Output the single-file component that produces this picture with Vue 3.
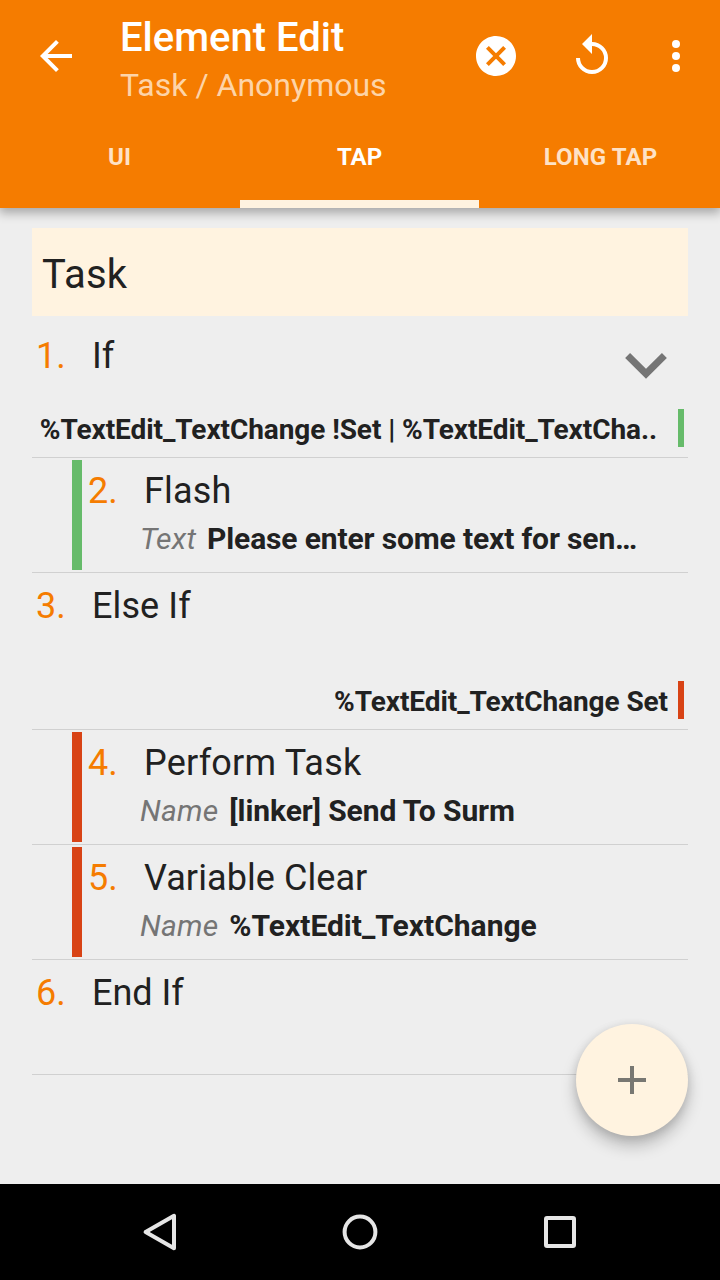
<script setup>
const tabs = [
  { label: 'UI', cls: 'tab-ui' },
  { label: 'TAP', cls: 'tab-tap', active: true },
  { label: 'LONG TAP', cls: 'tab-long' },
]

const actions = [
  { n: 1, name: 'If', kind: 'first', cond: '%TextEdit_TextChange !Set | %TextEdit_TextCha..', color: 'green', toggle: true },
  { n: 2, name: 'Flash', kind: 'nested', color: 'green', label: 'Text', value: 'Please enter some text for sen…', nameTrack: 0.2, valueTrack: -0.14 },
  { n: 3, name: 'Else If', kind: 'branch', cond: '%TextEdit_TextChange Set', color: 'red', nameTrack: 0.1 },
  { n: 4, name: 'Perform Task', kind: 'nested', color: 'red', label: 'Name', value: '[linker] Send To Surm', nameTrack: 0.2, valueTrack: -0.09 },
  { n: 5, name: 'Variable Clear', kind: 'nested', color: 'red', label: 'Name', value: '%TextEdit_TextChange', nameTrack: 0.08 },
  { n: 6, name: 'End If', kind: 'plain' },
]
const track = (v) => ({ letterSpacing: `${v || 0}px` })
</script>

<template>
  <div class="screen">
    <header class="header">
      <div class="toolbar">
        <svg class="back" width="32" height="32" viewBox="4 4 16 16"><path fill="#fff" d="M20 11H7.83l5.59-5.59L12 4l-8 8 8 8 1.41-1.41L7.83 13H20v-2z" /></svg>
        <div class="titles">
          <div class="title">Element Edit</div>
          <div class="subtitle">Task / Anonymous</div>
        </div>
        <svg class="close" width="48" height="48" viewBox="0 0 24 24"><path fill="#fff" d="M12 2C6.47 2 2 6.47 2 12s4.47 10 10 10 10-4.47 10-10S17.53 2 12 2zm5 13.59L15.59 17 12 13.41 8.41 17 7 15.59 10.59 12 7 8.41 8.41 7 12 10.59 15.59 7 17 8.41 13.41 12 17 15.59z" /></svg>
        <svg class="undo" width="48" height="48" viewBox="0 0 24 24"><path fill="#fff" d="M12 5V1L7 6l5 5V7a6 6 0 1 1-6 6H4a8 8 0 1 0 8-8z" /></svg>
        <svg class="more" width="8" height="32" viewBox="0 0 8 32"><g fill="#fff"><circle cx="4" cy="4" r="4" /><circle cx="4" cy="16" r="4" /><circle cx="4" cy="28" r="4" /></g></svg>
      </div>
      <nav class="tabs">
        <div v-for="t in tabs" :key="t.label" class="tab" :class="{ active: t.active }"><span :class="t.cls">{{ t.label }}</span></div>
      </nav>
    </header>

    <main class="content">
      <div class="task-box">Task</div>
      <div v-for="a in actions" :key="a.n" class="row" :class="a.kind">
        <div v-if="a.kind === 'nested'" class="indent-bar" :class="a.color"></div>
        <div class="body">
          <div class="heading">
            <span class="num">{{ a.n }}.</span>
            <span class="name" :style="track(a.nameTrack)">{{ a.name }}</span>
            <svg v-if="a.toggle" class="chevron" width="42" height="26" viewBox="0 0 42 26"><path d="M2.6 2.6 21 20.8 39.4 2.6" fill="none" stroke="#757575" stroke-width="7" /></svg>
          </div>
          <div v-if="a.cond" class="cond"><span class="cond-text">{{ a.cond }}</span><i class="cond-bar" :class="a.color"></i></div>
          <div v-if="a.label" class="param"><em>{{ a.label }}</em><b :style="track(a.valueTrack)">{{ a.value }}</b></div>
        </div>
      </div>
    </main>

    <button class="fab"><svg width="28" height="28" viewBox="0 0 28 28"><path d="M12 0h4v12h12v4H16v12h-4V16H0v-4h12z" fill="#787772" /></svg></button>

    <footer class="navbar">
      <svg width="40" height="40" viewBox="0 0 40 40"><path d="M34 3.8V36.2L5.6 20z" /></svg>
      <svg width="40" height="40" viewBox="0 0 40 40"><circle cx="20" cy="20" r="15.4" /></svg>
      <svg width="40" height="40" viewBox="0 0 40 40"><rect x="6" y="6" width="28" height="28" rx="1" /></svg>
    </footer>
  </div>
</template>

<style>
html, body { margin: 0; background: #eee; }
</style>

<style scoped>
.screen { position: relative; width: 720px; height: 1280px; display: flex; flex-direction: column; overflow: hidden; background: #eee; font-family: Roboto, sans-serif; color: #212121; white-space: nowrap; }
.header { flex: none; height: 208px; background: #f57c00; box-shadow: 0 4px 10px 1px rgba(0, 0, 0, .3); z-index: 1; }
.toolbar { height: 112px; display: flex; align-items: flex-start; }
.toolbar svg { flex: none; }
.back { margin: 40px 48px 0 40px; }
.titles { width: 352px; padding-top: 14px; }
.title { font-size: 40px; line-height: 48px; font-weight: 500; color: #fff; }
.subtitle { margin-top: 3px; font-size: 32px; line-height: 40px; color: #fdd4a8; }
.close { margin-top: 32px; }
.undo { margin: 32px 0 0 48px; }
.more { margin: 40px 0 0 56px; }
.tabs { height: 96px; display: flex; }
.tab { box-sizing: border-box; flex: 1; height: 96px; padding: 1px 0 0; text-align: center; font-size: 24px; line-height: 88px; font-weight: 700; color: #fee2c6; }
.tab.active { flex: none; width: 239px; color: #fff; border-bottom: 8px solid #fff3e0; }
.tab:first-child { flex: none; width: 240px; }
.tab-long { letter-spacing: .1px; margin-left: 2px; }
.tab-ui { margin-right: 1px; }
.content { flex: none; height: 956px; padding: 20px 32px 0; box-sizing: content-box; }
.task-box { height: 83px; padding: 5px 0 0 10px; background: #fff3e0; font-size: 40px; line-height: 84px; letter-spacing: .25px; }
.row { box-sizing: border-box; display: flex; height: 115px; border-bottom: 1px solid #d0d0d0; }
.row.branch { height: 157px; }
.row.first { height: 142px; padding-top: 7px; }
.indent-bar { width: 10px; height: 110px; margin: 2px 0 0 40px; flex: none; }
.green { background: #66bb6a; }
.red { background: #d84315; }
.body { flex: 1; min-width: 0; display: flex; flex-direction: column; }
.heading { display: flex; height: 64px; margin-top: 1px; line-height: 65px; font-size: 36px; padding-left: 4px; }
.first .heading { height: 50px; }
.nested .heading { padding-left: 6px; }
.num { width: 56px; color: #f57c00; }
.chevron { margin: 29px 21px 0 auto; }
.cond { display: flex; justify-content: flex-end; margin: auto 4px 10px 0; height: 38px; font-size: 28px; line-height: 41px; font-weight: 700; letter-spacing: -.075px; }
.cond-bar { width: 6px; height: 38px; margin-left: 10px; }
.first .cond-bar { margin-left: 21px; }
.param { padding-left: 58px; font-size: 30px; line-height: 32px; }
.param em { color: #757575; margin-right: 11px; letter-spacing: .2px; }
.fab { position: absolute; left: 576px; top: 1024px; width: 112px; height: 112px; padding: 0; border: 0; border-radius: 50%; background: #fff3e0; display: flex; align-items: center; justify-content: center; box-shadow: 0 10px 16px rgba(0, 0, 0, .22), 0 2px 10px rgba(0, 0, 0, .12); }
.navbar { flex: none; height: 96px; background: #000; display: flex; align-items: center; justify-content: center; gap: 160px; }
.navbar svg { fill: none; stroke: #e6e6e6; stroke-width: 4; stroke-linejoin: round; }
</style>
